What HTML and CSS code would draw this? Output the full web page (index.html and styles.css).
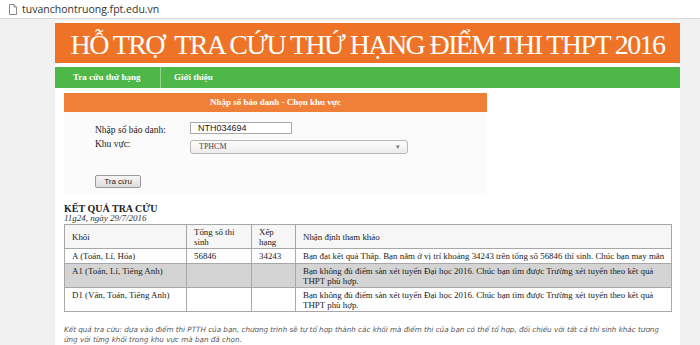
FILE: index.html
```html
<!DOCTYPE html>
<html lang="vi">
<head>
    <meta charset="UTF-8">
    <title>Tra cứu thứ hạng điểm thi THPT 2016</title>
    <link rel="stylesheet" href="styles.css">
</head>
<body>
    <div class="address-bar">
        <svg class="page-icon" width="8" height="11" viewBox="0 0 8 11">
            <path d="M0.5 0.5h4.5l2.5 2.5v7.5h-7z M5 0.5v2.5h2.5" fill="#fff" stroke="#8a8a8a" stroke-width="1"/>
        </svg>
        <span>tuvanchontruong.fpt.edu.vn</span>
    </div>

    <div class="page">
        <div class="banner">HỖ TRỢ&nbsp; TRA CỨU THỨ HẠNG ĐIỂM THI THPT 2016</div>

        <div class="nav">
            <a class="nav-item first">Tra cứu thứ hạng</a>
            <a class="nav-item">Giới thiệu</a>
        </div>

        <div class="content">
            <div class="form-box">
                <div class="form-title">Nhập số báo danh - Chọn khu vực</div>
                <div class="form-body">
                    <div class="form-row">
                        <label>Nhập số báo danh:</label>
                        <div class="text-input">NTH034694</div>
                    </div>
                    <div class="form-row">
                        <label>Khu vực:</label>
                        <div class="select-input">TPHCM <span class="arrow">▾</span></div>
                    </div>
                    <button class="btn">Tra cứu</button>
                </div>
            </div>

            <div class="results">
                <div class="results-title">KẾT QUẢ TRA CỨU</div>
                <div class="results-date">11g24, ngày 29/7/2016</div>
                <table class="result-table">
                    <tr class="head">
                        <td class="c1">Khối</td>
                        <td class="c2">Tổng số thi sinh</td>
                        <td class="c3">Xếp hạng</td>
                        <td>Nhận định tham khảo</td>
                    </tr>
                    <tr>
                        <td>A (Toán, Lí, Hóa)</td>
                        <td>56846</td>
                        <td>34243</td>
                        <td>Bạn đạt kết quả Thấp. Bạn nằm ở vị trí khoảng 34243 trên tổng số 56846 thí sinh. Chúc bạn may mắn</td>
                    </tr>
                    <tr class="gray">
                        <td>A1 (Toán, Lí, Tiếng Anh)</td>
                        <td></td>
                        <td></td>
                        <td>Bạn không đủ điểm sàn xét tuyển Đại học 2016. Chúc bạn tìm được Trường xét tuyển theo kết quả THPT phù hợp.</td>
                    </tr>
                    <tr>
                        <td>D1 (Văn, Toán, Tiếng Anh)</td>
                        <td></td>
                        <td></td>
                        <td>Bạn không đủ điểm sàn xét tuyển Đại học 2016. Chúc bạn tìm được Trường xét tuyển theo kết quả THPT phù hợp.</td>
                    </tr>
                </table>
                <p class="note">Kết quả tra cứu: dựa vào điểm thi PTTH của bạn, chương trình sẽ tự tổ hợp thành các khối mà điểm thi của bạn có thể tổ hợp, đối chiếu với tất cả thí sinh khác tương ứng với từng khối trong khu vực mà bạn đã chọn.</p>
            </div>
        </div>
    </div>
</body>
</html>
```

FILE: styles.css
```css
body {
    margin: 0;
    background: #f1f1f1;
    font-family: 'Liberation Serif', 'Times New Roman', serif;
    color: #222;
    overflow: hidden;
}

.address-bar {
    height: 18px;
    background: #fff;
    border-bottom: 1px solid #d6d6d6;
    display: flex;
    align-items: center;
    gap: 5px;
    padding-left: 9px;
    font-family: 'Open Sans', 'Liberation Sans', sans-serif;
    font-size: 10.5px;
    color: #333;
}

.page-icon {
    display: block;
}

.page {
    margin: 2px 0 0 55px;
    width: 625px;
    height: 330px;
    background: #fff;
    padding-top: 2px;
}

.banner {
    height: 40px;
    background: #ef7326;
    color: #fff;
    font-size: 28px;
    letter-spacing: -1.6px;
    line-height: 43px;
    text-align: center;
    white-space: nowrap;
    overflow: hidden;
}

.nav {
    margin-top: 4px;
    height: 21px;
    background: #4db848;
    display: flex;
    align-items: center;
}

.nav-item {
    color: #fff;
    font-weight: bold;
    font-size: 9px;
    padding: 0 13px;
    line-height: 21px;
}

.nav-item.first {
    width: 74px;
    padding-left: 18px;
    border-right: 1px solid #8fd48b;
}

.content {
    padding: 5px 8px 0 9px;
}

.form-box {
    width: 423px;
}

.form-title {
    height: 19px;
    line-height: 19px;
    background: #f07f38;
    color: #fff;
    font-weight: bold;
    font-size: 9px;
    text-align: center;
}

.form-body {
    background: #fbfbfb;
    height: 81px;
    padding: 10px 0 0 31px;
    box-sizing: border-box;
    font-size: 9.5px;
}

.form-row {
    display: flex;
    align-items: flex-start;
}

.form-row label {
    width: 95px;
    line-height: 11px;
    margin-top: 3px;
}

.text-input {
    width: 93px;
    height: 10px;
    border: 1px solid #a9a9a9;
    background: #fff;
    font-family: 'Liberation Sans', sans-serif;
    font-size: 9px;
    line-height: 10px;
    padding-left: 7px;
    color: #222;
}

.select-input {
    margin-top: 4px;
    width: 208px;
    height: 12px;
    border: 1px solid #b9b9b9;
    border-radius: 3px;
    background: linear-gradient(#fdfdfd, #ececec);
    font-size: 8px;
    line-height: 12px;
    padding-left: 8px;
    display: flex;
    justify-content: space-between;
    color: #444;
}

.arrow {
    font-size: 7px;
    color: #777;
    margin-right: 7px;
}

.btn {
    margin-top: 21px;
    width: 46px;
    height: 13px;
    padding: 0;
    font-family: 'Liberation Sans', sans-serif;
    font-size: 8px;
    line-height: 11px;
    color: #222;
    background: linear-gradient(#f6f6f6, #dddddd);
    border: 1px solid #9a9a9a;
    border-radius: 2px;
}

.results {
    margin-top: 11px;
}

.results-title {
    font-weight: bold;
    font-size: 10px;
    line-height: 10px;
}

.results-date {
    font-style: italic;
    font-size: 9px;
    line-height: 9px;
    color: #333;
}

.result-table {
    margin-top: 1px;
    width: 608px;
    border-collapse: collapse;
    table-layout: fixed;
    font-size: 8.9px;
    line-height: 10px;
    border: 1px solid #a8a8a8;
}

.result-table td {
    border: 1px solid #a8a8a8;
    padding: 2px 3px 1px 7px;
    vertical-align: top;
    height: 11px;
}

.result-table .head td {
    background: #f6f6f6;
    vertical-align: middle;
    height: 21px;
    padding-top: 1px;
}

.result-table .c1 { width: 111px; }
.result-table .c2 { width: 54px; }
.result-table .c3 { width: 33px; }

.result-table tr.gray td {
    background: #d4d4d4;
}

.result-table tr.gray td,
.result-table tr:last-child td {
    height: 19px;
}

.note {
    margin: 13px 0 0;
    font-family: 'DejaVu Sans', Verdana, sans-serif;
    font-style: italic;
    font-size: 7.2px;
    line-height: 9.5px;
    color: #555;
}
```
